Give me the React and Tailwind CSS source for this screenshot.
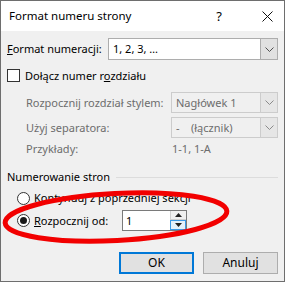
import React from "react";

const Chevron = ({ color = "#505050" }) => (
  <svg width="9" height="5" viewBox="0 0 9 5">
    <polyline points="0.5,0.5 4.5,4.5 8.5,0.5" fill="none" stroke={color} strokeWidth="1" />
  </svg>
);

function Select({ text, w, disabled }) {
  return (
    <div
      className={`flex h-full items-stretch border ${disabled ? "border-[#cccccc] bg-[#f0f0f0] text-[#6d6d6d]" : "border-[#adadad] bg-white text-black"}`}
      style={{ width: w }}
    >
      <div className="flex flex-1 items-center pl-[4px] whitespace-nowrap">{text}</div>
      <div className={`flex w-[17px] items-center justify-center border-l ${disabled ? "border-[#cccccc] bg-[#e6e6e6]" : "border-[#adadad] bg-[#e1e1e1]"}`}>
        <Chevron color={disabled ? "#8a8a8a" : "#505050"} />
      </div>
    </div>
  );
}

export default function App() {
  return (
    <div
      className="relative w-[285px] h-[282px] border border-[#6e6e6e] bg-[#f0f0f0] text-[11px] leading-[16px] text-black whitespace-nowrap"
      style={{ fontFamily: '"Noto Sans", "DejaVu Sans", sans-serif' }}
    >
      {/* title bar */}
      <div className="flex h-[30px] items-center bg-white pl-[8px]">
        <span className="text-[11.5px]">Format numeru strony</span>
        <span className="ml-auto mr-[40px] text-[13px]">?</span>
        <svg width="11" height="11" viewBox="0 0 11 11" className="mr-[11px]">
          <line x1="0.5" y1="0.5" x2="10.5" y2="10.5" stroke="#111" strokeWidth="1" />
          <line x1="10.5" y1="0.5" x2="0.5" y2="10.5" stroke="#111" strokeWidth="1" />
        </svg>
      </div>

      <div className="flex flex-col pl-[6px]">
        {/* Format numeracji */}
        <div className="mt-[7px] flex h-[22px] items-center">
          <span className="w-[101px]">
            <span className="underline">F</span>ormat numeracji:
          </span>
          <Select text="1, 2, 3, …" w={170} />
        </div>

        {/* checkbox */}
        <div className="mt-[9px] flex h-[13px] items-center">
          <div className="h-[13px] w-[13px] border border-[#333333] bg-white" />
          <span className="ml-[5px]">
            Dołącz numer r<span className="underline">o</span>zdziału
          </span>
        </div>

        <div className="mt-[10px] flex h-[21px] items-center pl-[19px] text-[#6d6d6d]">
          <span className="w-[145px]">Rozpocznij rozdział stylem:</span>
          <Select text="Nagłówek 1" w={107} disabled />
        </div>
        <div className="mt-[4px] flex h-[21px] items-center pl-[19px] text-[#6d6d6d]">
          <span className="w-[145px]">Użyj separatora:</span>
          <Select text={<span className="whitespace-pre">-    (łącznik)</span>} w={107} disabled />
        </div>
        <div className="mt-[3px] flex h-[16px] items-center pl-[19px] text-[#6d6d6d]">
          <span className="w-[146px]">Przykłady:</span>
          <span>1-1, 1-A</span>
        </div>

        {/* group header */}
        <div className="mt-[12px] flex h-[16px] items-center">
          <span>Numerowanie stron</span>
          <div className="ml-[6px] mr-[6px] h-px flex-1 bg-[#dcdcdc]" />
        </div>

        <div className="mt-[5px] flex h-[16px] items-center pl-[10px]">
          <div className="h-[13px] w-[13px] rounded-full border border-[#333333] bg-white" />
          <span className="ml-[4px]">
            <span className="underline">K</span>ontynuuj z poprzedniej sekcji
          </span>
        </div>

        <div className="mt-[4px] flex h-[21px] items-center pl-[10px]">
          <div className="flex h-[13px] w-[13px] items-center justify-center rounded-full border border-[#333333] bg-white">
            <div className="h-[7px] w-[7px] rounded-full bg-[#1a1a1a]" />
          </div>
          <span className="ml-[4px] w-[88px]">
            <span className="underline">R</span>ozpocznij od:
          </span>
          <div className="flex h-[21px] w-[65px] items-stretch border border-[#7a7a7a] bg-white">
            <div className="flex flex-1 items-center pl-[3px]">1</div>
            <div className="flex w-[16px] flex-col">
              <div className="flex flex-1 items-center justify-center border-b border-l border-[#cfcfcf] bg-[#f0f0f0]">
                <svg width="7" height="4" viewBox="0 0 7 4"><polygon points="0,4 3.5,0 7,4" fill="#222" /></svg>
              </div>
              <div className="flex flex-1 items-center justify-center border border-[#3c9ae6] bg-[#e5f1fb]">
                <svg width="7" height="4" viewBox="0 0 7 4"><polygon points="0,0 3.5,4 7,0" fill="#222" /></svg>
              </div>
            </div>
          </div>
        </div>

        <div className="mt-[21px] flex h-[22px] justify-end gap-[9px] pr-[6px]">
          <button className="w-[75px] border-2 border-[#0078d7] bg-[#e1e1e1] text-[12px]">OK</button>
          <button className="w-[75px] border border-[#adadad] bg-[#e1e1e1] text-[12px]">Anuluj</button>
        </div>
      </div>

      {/* red annotation ellipse */}
      <svg className="pointer-events-none absolute left-[-1px] top-[-1px]" width="285" height="282" viewBox="0 0 285 282">
        <ellipse cx="116" cy="217" rx="111" ry="23.5" fill="none" stroke="#f20000" strokeWidth="5" transform="rotate(-3 116 217)" />
      </svg>
    </div>
  );
}
